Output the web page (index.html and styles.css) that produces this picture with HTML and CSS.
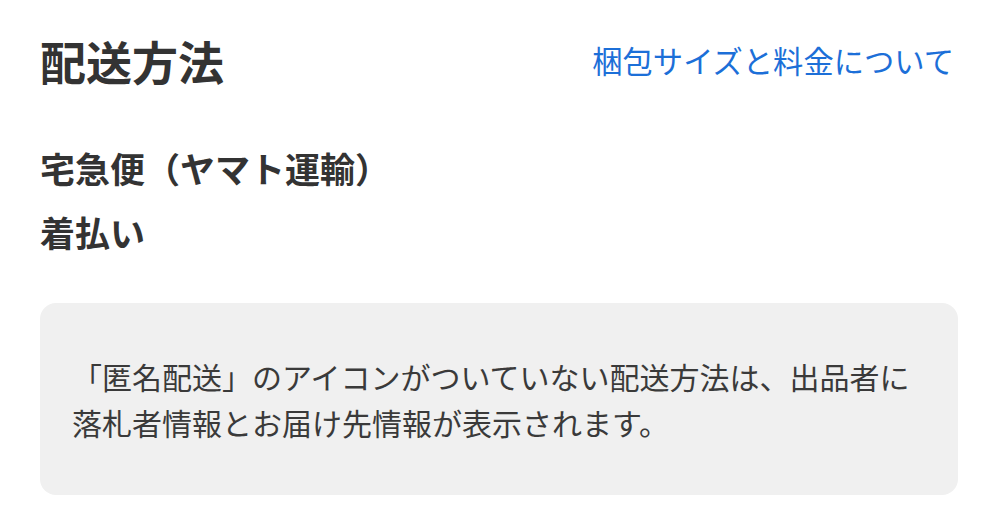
FILE: index.html
```html
<!DOCTYPE html>
<html lang="ja">
<head>
  <meta charset="UTF-8">
  <title>配送方法</title>
  <link rel="stylesheet" href="styles.css">
</head>
<body>
  <div class="page">
    <div class="header">
      <h1>配送方法</h1>
      <a href="#" class="link">梱包サイズと料金について</a>
    </div>
    <div class="method">
      <p>宅急便（ヤマト運輸）</p>
      <p>着払い</p>
    </div>
    <div class="notice">
      「匿名配送」のアイコンがついていない配送方法は、出品者に<br>落札者情報とお届け先情報が表示されます。
    </div>
  </div>
</body>
</html>
```
FILE: styles.css
```css
body { margin: 0; background: #fff; font-family: "Noto Sans CJK JP", "Noto Sans", sans-serif; color: #333; }
.page { padding: 0 41px 0 40px; }
.header { display: flex; justify-content: space-between; align-items: center; height: 120px; padding-right: 4px; }
h1 { margin: 0; font-size: 46px; font-weight: bold; line-height: 1; }
.link { font-size: 30.3px; color: #1c6fd8; text-decoration: none; line-height: 1; }
.method { margin-top: 16px; }
.method p { margin: 0; font-size: 35px; font-weight: bold; line-height: 64px; }
.notice { margin-top: 39px; background: #f0f0f0; border-radius: 16px; padding: 50px 20px 50px 32px; font-size: 30px; line-height: 46px; color: #3a3a3a; white-space: nowrap; }
```
